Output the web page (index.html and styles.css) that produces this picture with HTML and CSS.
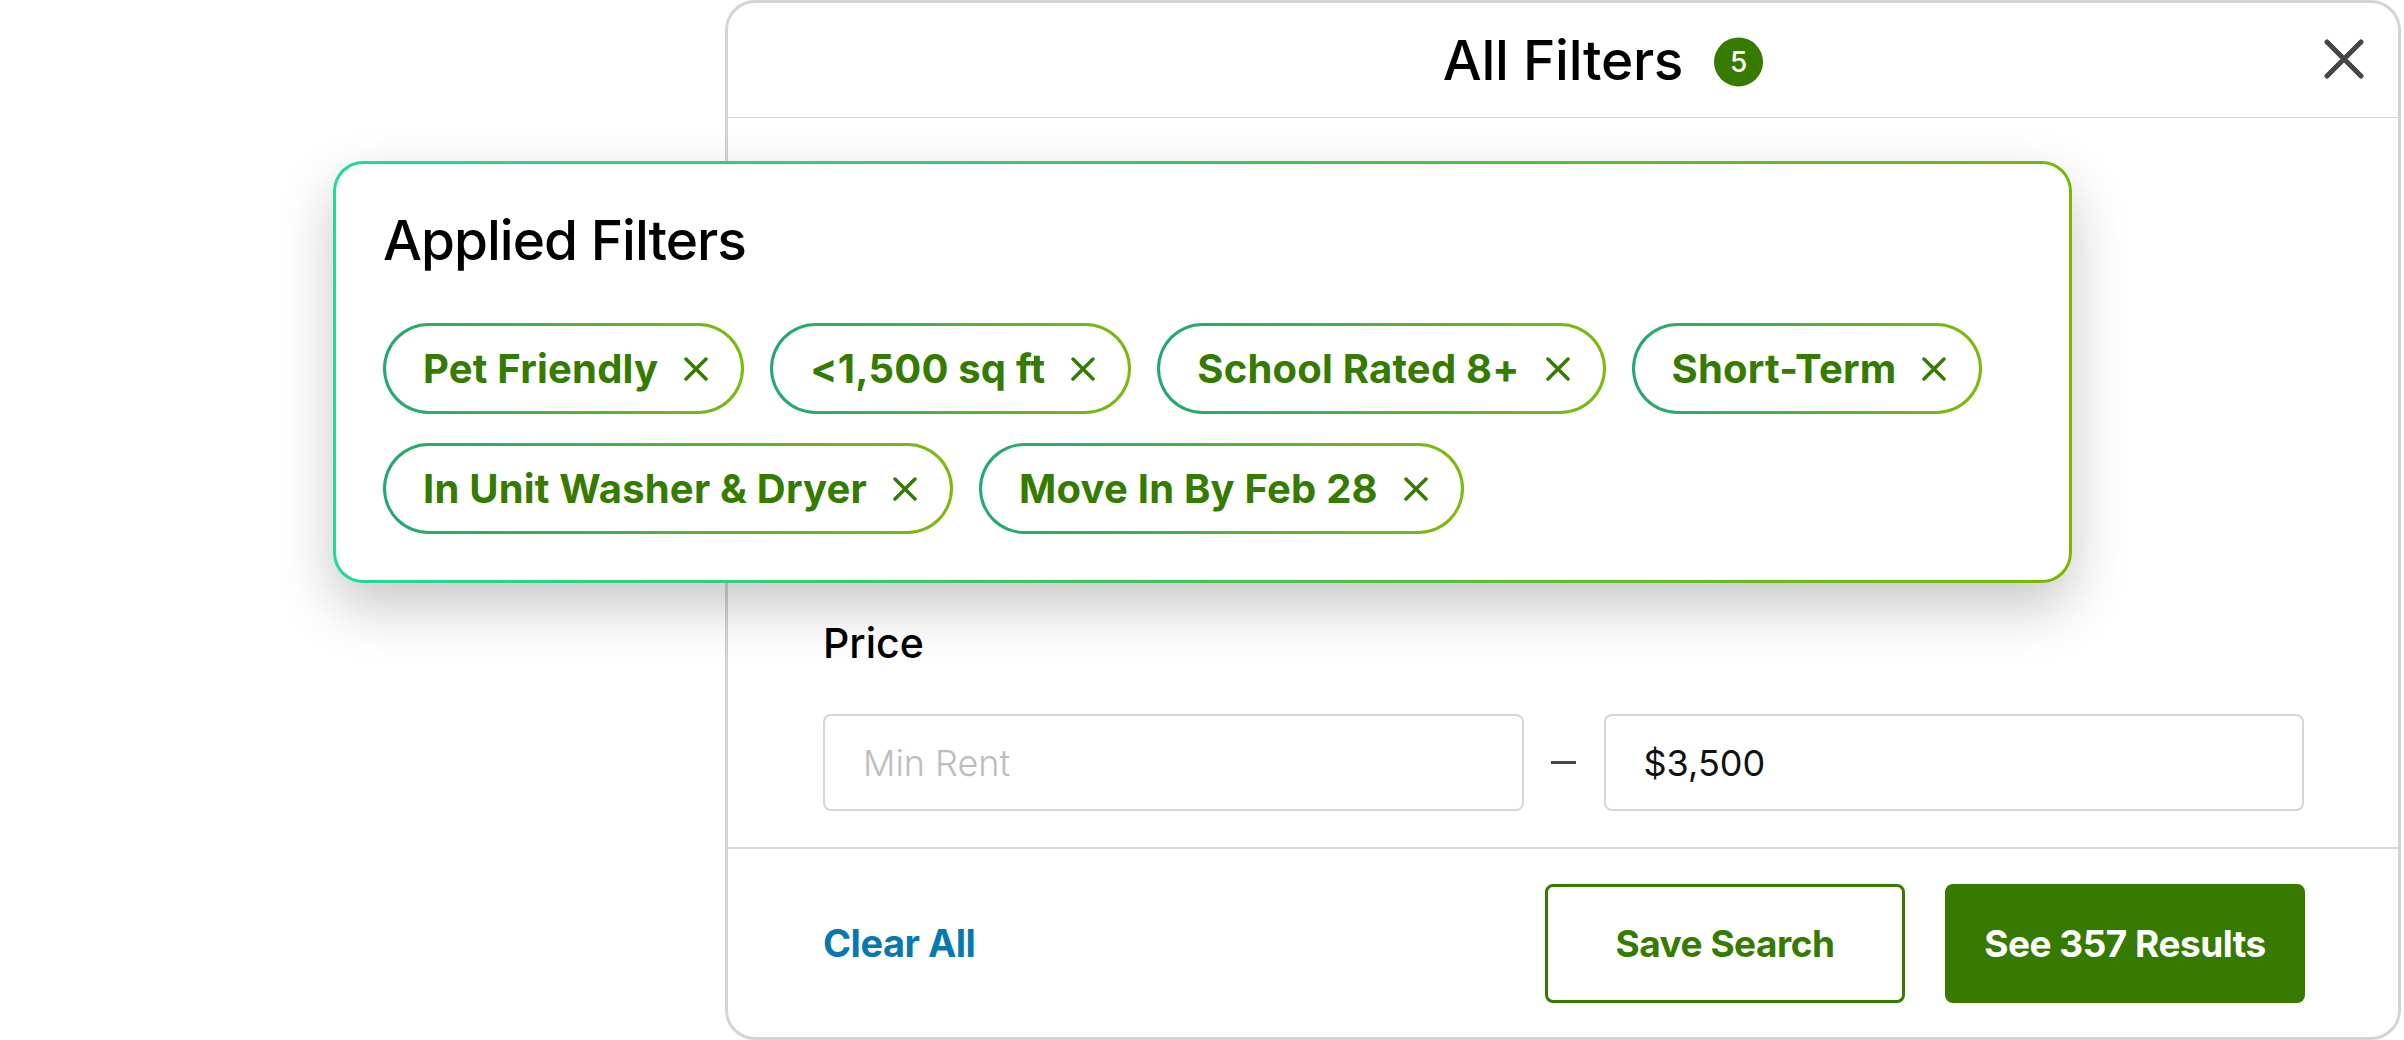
FILE: index.html
```html
<!DOCTYPE html>
<html lang="en">
<head>
<meta charset="utf-8">
<title>All Filters</title>
<link rel="stylesheet" href="styles.css">
</head>
<body>
<div class="stage">
  <section class="modal">
    <header class="modal-head">
      <h1 class="title">All Filters<span class="count">5</span></h1>
      <button class="close" aria-label="Close">
        <svg width="40" height="40" viewBox="0 0 40 40"><path d="M3 3 L37 37 M37 3 L3 37" stroke="#454545" stroke-width="5" stroke-linecap="round" fill="none"/></svg>
      </button>
    </header>
    <div class="modal-body">
      <div class="field">
        <div class="label">Price</div>
        <div class="range">
          <div class="input placeholder">Min Rent</div>
          <span class="dash"></span>
          <div class="input">$3,500</div>
        </div>
      </div>
    </div>
    <footer class="modal-foot">
      <a class="clear">Clear All</a>
      <div class="actions">
        <button class="btn outline">Save Search</button>
        <button class="btn solid">See 357 Results</button>
      </div>
    </footer>
  </section>

  <aside class="applied">
    <h2 class="applied-title">Applied Filters</h2>
    <div class="chips">
      <span class="chip">Pet Friendly<svg class="x" viewBox="0 0 24 24"><path d="M2 2 L22 22 M22 2 L2 22"/></svg></span>
      <span class="chip">&lt;1,500 sq ft<svg class="x" viewBox="0 0 24 24"><path d="M2 2 L22 22 M22 2 L2 22"/></svg></span>
      <span class="chip">School Rated 8+<svg class="x" viewBox="0 0 24 24"><path d="M2 2 L22 22 M22 2 L2 22"/></svg></span>
      <span class="chip">Short-Term<svg class="x" viewBox="0 0 24 24"><path d="M2 2 L22 22 M22 2 L2 22"/></svg></span>
      <span class="chip">In Unit Washer &amp; Dryer<svg class="x" viewBox="0 0 24 24"><path d="M2 2 L22 22 M22 2 L2 22"/></svg></span>
      <span class="chip">Move In By Feb 28<svg class="x" viewBox="0 0 24 24"><path d="M2 2 L22 22 M22 2 L2 22"/></svg></span>
    </div>
  </aside>
</div>
</body>
</html>
```

FILE: styles.css
```css
* { box-sizing: border-box; }

html, body {
  margin: 0;
  padding: 0;
  background: #ffffff;
}

body {
  font-family: "Inter", "Lato", "Noto Sans", sans-serif;
  color: #000;
}

.stage {
  position: relative;
  width: 2404px;
  height: 1040px;
  overflow: hidden;
}

.modal {
  margin-left: 725px;
  width: 1676px;
  height: 1040px;
  border: 3px solid #d4d4d4;
  border-radius: 30px;
  background: #fff;
  display: flex;
  flex-direction: column;
}

.modal-head {
  position: relative;
  height: 115px;
  flex: none;
  border-bottom: 1px solid #d6d6d6;
  display: flex;
  align-items: center;
  justify-content: center;
}

.title {
  position: relative;
  margin: 0;
  font-size: 55px;
  font-weight: 500;
  line-height: 1;
  letter-spacing: -0.3px;
}

.count {
  position: absolute;
  left: calc(100% + 31px);
  top: 50%;
  transform: translateY(-46%);
  width: 49px;
  height: 49px;
  border-radius: 50%;
  background: #367b00;
  color: #fff;
  font-size: 28px;
  font-weight: 500;
  letter-spacing: 0;
  display: flex;
  align-items: center;
  justify-content: center;
}

.close {
  position: absolute;
  right: 34px;
  top: 36px;
  width: 40px;
  height: 40px;
  padding: 0;
  border: 0;
  background: none;
}

.close svg { display: block; }

.modal-body {
  flex: 1;
  display: flex;
  flex-direction: column;
  justify-content: flex-end;
  padding: 0 94px 36px 95px;
}

.label {
  font-size: 41px;
  font-weight: 500;
  line-height: 1;
  margin-bottom: 50px;
}

.range {
  display: flex;
  align-items: center;
}

.input {
  flex: 1;
  height: 97px;
  border: 2px solid #d6d6d6;
  border-radius: 8px;
  display: flex;
  align-items: center;
  padding-left: 38px;
  font-size: 36px;
  font-weight: 400;
  color: #111;
}

.input.placeholder {
  color: #bdbdbd;
  font-weight: 300;
}

.dash {
  width: 25px;
  height: 3px;
  background: #444;
  margin: 0 28px 0 27px;
}

.modal-foot {
  height: 190px;
  flex: none;
  border-top: 2px solid #d8d8d8;
  display: flex;
  align-items: center;
  justify-content: space-between;
  padding: 0 93px 0 95px;
}

.clear {
  color: #0878ad;
  font-size: 38px;
  font-weight: 700;
  letter-spacing: -0.5px;
  text-decoration: none;
}

.actions {
  display: flex;
  gap: 40px;
}

.btn {
  width: 360px;
  height: 119px;
  border-radius: 8px;
  font-family: inherit;
  font-size: 37px;
  font-weight: 700;
  letter-spacing: -0.5px;
}

.btn.outline {
  background: #fff;
  border: 3px solid #367b00;
  color: #367b00;
}

.btn.solid {
  background: #367b00;
  border: 0;
  color: #fff;
}

.applied {
  position: absolute;
  left: 333px;
  top: 161px;
  width: 1739px;
  height: 422px;
  border: 3px solid transparent;
  border-radius: 30px;
  background:
    linear-gradient(#fff, #fff) padding-box,
    linear-gradient(100deg, #1ddc9c 0%, #45c25a 50%, #7ab800 100%) border-box;
  box-shadow: 0 24px 56px rgba(0, 0, 0, 0.22);
  padding: 49px 47px 0 47px;
}

.applied-title {
  margin: 0;
  font-size: 55px;
  font-weight: 500;
  line-height: 1;
  letter-spacing: -1px;
  margin-bottom: 55px;
}

.chips {
  display: flex;
  flex-wrap: wrap;
  gap: 29px 26px;
}

.chip {
  display: inline-flex;
  align-items: center;
  height: 91px;
  padding: 0 33px 0 37px;
  border: 3px solid transparent;
  border-radius: 46px;
  background:
    linear-gradient(#fff, #fff) padding-box,
    linear-gradient(90deg, #22a873 0%, #7cbb0a 100%) border-box;
  color: #357b00;
  font-size: 40px;
  font-weight: 700;
  letter-spacing: 0.2px;
  white-space: nowrap;
}

.x {
  width: 24px;
  height: 24px;
  margin-left: 26px;
  stroke: #357b00;
  stroke-width: 3.5;
  stroke-linecap: round;
  fill: none;
}
```
